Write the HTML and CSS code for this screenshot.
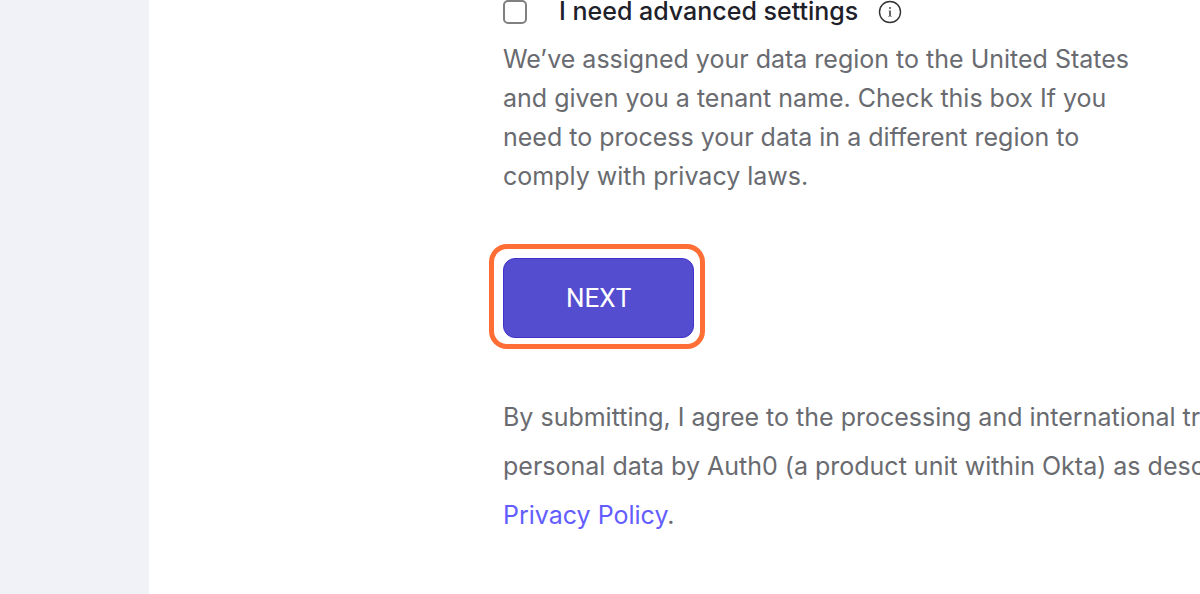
FILE: index.html
```html
<!DOCTYPE html>
<html lang="en">
<head>
<meta charset="utf-8">
<meta name="viewport" content="width=device-width, initial-scale=1">
<title>Sign up</title>
<link rel="stylesheet" href="styles.css">
</head>
<body>
<div class="page">
  <aside class="side"></aside>
  <main class="content">
    <form class="form">
      <div class="option">
        <input class="option-box" type="checkbox" id="advanced">
        <label class="option-label" for="advanced">I need advanced settings</label>
        <svg class="info" viewBox="0 0 24 24" aria-hidden="true"><circle cx="12" cy="12" r="10.5" fill="none" stroke="#333" stroke-width="1.4"/><path d="M12 10.5v6" fill="none" stroke="#666" stroke-width="2"/><path d="M10.5 10.8H12M10 16.5h4" fill="none" stroke="#aaa" stroke-width="1"/><rect x="11" y="7" width="2" height="2" fill="#777"/></svg>
      </div>
      <p class="hint">We’ve assigned your data region to the United States and given you a tenant name. Check this box If you need to process your data in a different region to comply with privacy laws.</p>
      <div class="highlight"><button class="next" type="button">NEXT</button></div>
      <p class="terms">By submitting, I agree to the processing and international transfer<br>personal data by Auth0 (a product unit within Okta) as described<br><a class="link" href="#privacy">Privacy Policy</a>.</p>
    </form>
  </main>
</div>
</body>
</html>
```
FILE: styles.css
```css
* { box-sizing: border-box; }

body {
  margin: 0;
  font-family: Inter, "Liberation Sans", sans-serif;
  font-size: 25px;
  color: #696b70;
  background: #fff;
}

.page { display: flex; min-height: 100vh; }

.side { flex: 0 0 149px; background: #f0f2f7; }

.content { flex: 1; min-width: 0; padding-left: 354px; overflow: hidden; }

.form { display: flex; flex-direction: column; align-items: flex-start; }

.option { display: flex; align-items: center; height: 24px; color: #1e212a; }

.option-box {
  appearance: none;
  width: 24px;
  height: 24px;
  margin: 0 32px 0 0;
  border: 2px solid #808080;
  border-radius: 5px;
  background: #fff;
}

.option-box:checked { background: #554dcf; }

.option-label { font-weight: 500; line-height: 24px; padding-bottom: 2px; }

.info { width: 24px; height: 24px; margin-left: 20px; }

.hint { max-width: 640px; margin: 16px 0 0; line-height: 39px; }

/* Ring that draws attention to the primary action. */
.highlight {
  margin: 48px 0 0 -14px;
  padding: 9px 6px 6px 9px;
  border: 5px solid #ff6e35;
  border-radius: 18px;
}

.next {
  display: block;
  padding: 20px 62px;
  border: 1px solid #3f31c9;
  border-radius: 12px;
  background: #554dcf;
  color: #fff;
  font: 26px/38px Roboto, sans-serif;
}

.terms { margin: 44px 0 0; line-height: 49px; white-space: nowrap; }

.link { color: #635dff; text-decoration: none; }
```
